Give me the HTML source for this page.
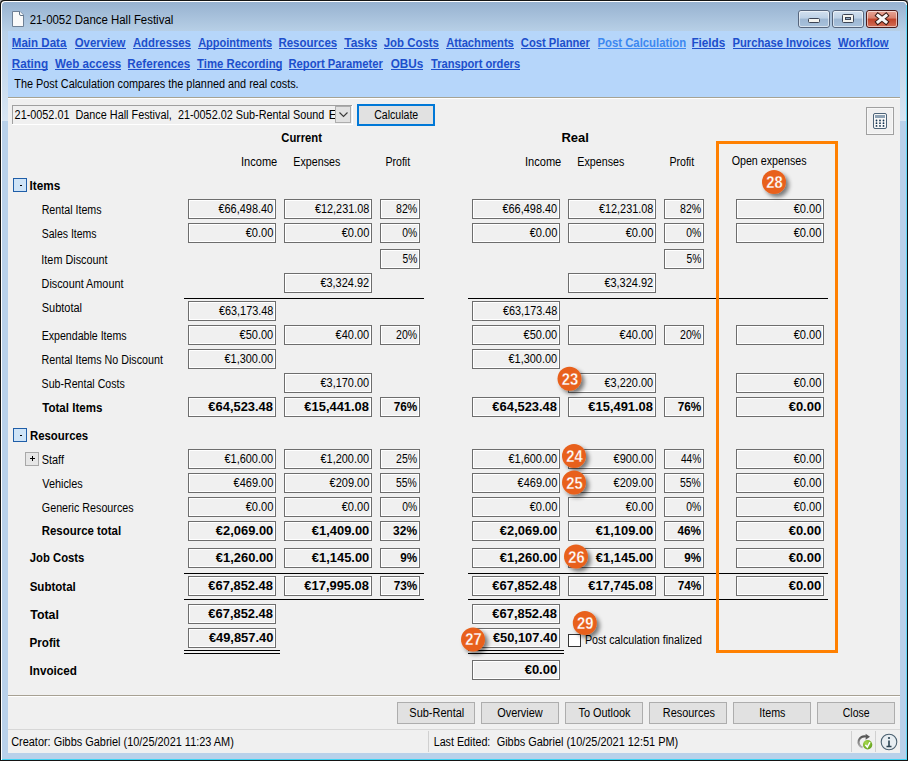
<!DOCTYPE html>
<html><head><meta charset="utf-8"><style>
html,body{margin:0;padding:0;width:908px;height:761px;overflow:hidden;background:#f0f0f0}
svg{display:block}
text{font-family:"Liberation Sans", sans-serif}
</style></head><body>
<svg width="908" height="761" viewBox="0 0 908 761" font-family='"Liberation Sans", sans-serif'>
<defs><linearGradient id="tb" x1="0" y1="0" x2="0" y2="1"><stop offset="0" stop-color="#97b2d0"/><stop offset="1" stop-color="#b7cfe6"/></linearGradient><linearGradient id="lf" x1="0" y1="0" x2="0" y2="1"><stop offset="0" stop-color="#b9d0e8"/><stop offset="1" stop-color="#bcd3ea"/></linearGradient><linearGradient id="btn" x1="0" y1="0" x2="0" y2="1"><stop offset="0" stop-color="#d3e1f0"/><stop offset="0.45" stop-color="#bdd1e6"/><stop offset="0.5" stop-color="#9db7d3"/><stop offset="1" stop-color="#a9c2dc"/></linearGradient><linearGradient id="cls" x1="0" y1="0" x2="0" y2="1"><stop offset="0" stop-color="#e8a89a"/><stop offset="0.45" stop-color="#d8806c"/><stop offset="0.5" stop-color="#c0432a"/><stop offset="1" stop-color="#d4715a"/></linearGradient><filter id="sh" x="-50%" y="-50%" width="200%" height="200%"><feGaussianBlur in="SourceAlpha" stdDeviation="2"/><feOffset dx="3" dy="3" result="o"/><feComponentTransfer><feFuncA type="linear" slope="0.5"/></feComponentTransfer><feMerge><feMergeNode/><feMergeNode in="SourceGraphic"/></feMerge></filter></defs><rect x="0" y="0" width="908" height="761" fill="#b4b4b4"/><path d="M0 761 V4 Q0 0 4 0 H904 Q908 0 908 4 V761 Z" fill="#141414"/><path d="M1 760 V5 Q1 1 5 1 H903 Q907 1 907 5 V760 Z" fill="#fff"/><path d="M2 759 V6 Q2 2 6 2 H902 Q906 2 906 6 V759 Z" fill="#b9d1ea"/><rect x="906" y="5" width="1" height="755" fill="#62d9f7"/><rect x="907" y="4" width="1" height="757" fill="#141414"/><rect x="2" y="759" width="905" height="1" fill="#3fd3f3"/><linearGradient id="sg" x1="0" y1="0" x2="0" y2="1"><stop offset="0" stop-color="#b8d0e8"/><stop offset="1" stop-color="#d9e6f3"/></linearGradient><rect x="2" y="31" width="6" height="90" fill="url(#sg)"/><rect x="900" y="31" width="6" height="90" fill="url(#sg)"/><path d="M2 31 V6 Q2 2 6 2 H902 Q906 2 906 6 V31 Z" fill="url(#tb)"/><path d="M12.5 11.5 H20 L23.5 15 V26.5 H12.5 Z" fill="#fafafa" stroke="#6f8196" stroke-width="1"/><path d="M19.5 11.5 V14 Q19.5 15.5 21 15.5 H23.5" fill="#ffffff" stroke="#5f7388" stroke-width="1"/><text x="29.64" y="24" font-size="12" textLength="143.66" lengthAdjust="spacingAndGlyphs">21-0052 Dance Hall Festival</text><rect x="798.5" y="10.5" width="31" height="17" fill="url(#btn)" stroke="#56657c" stroke-width="1" rx="2.5"/><rect x="799.5" y="11.5" width="29" height="15" fill="none" stroke="rgba(255,255,255,0.55)" stroke-width="1" rx="1.5"/><rect x="832.5" y="10.5" width="31" height="17" fill="url(#btn)" stroke="#56657c" stroke-width="1" rx="2.5"/><rect x="833.5" y="11.5" width="29" height="15" fill="none" stroke="rgba(255,255,255,0.55)" stroke-width="1" rx="1.5"/><rect x="866.5" y="10.5" width="31" height="17" fill="url(#cls)" stroke="#4a1a1a" stroke-width="1" rx="2.5"/><rect x="867.5" y="11.5" width="29" height="15" fill="none" stroke="rgba(255,255,255,0.55)" stroke-width="1" rx="1.5"/><rect x="808.5" y="18.5" width="11" height="4" fill="#f4f4f0" stroke="#3c4454" stroke-width="1" rx="1"/><rect x="842.5" y="14.5" width="11" height="8" fill="#f4f4f0" stroke="#3c4454" stroke-width="1" rx="1"/><rect x="845.5" y="17.5" width="5" height="2" fill="#8fa8c4" stroke="#3c4454" stroke-width="1"/><path d="M878 15.5 L886 22 M886 15.5 L878 22" stroke="#3a1a14" stroke-width="5" stroke-linecap="square"/><path d="M878 15.5 L886 22 M886 15.5 L878 22" stroke="#f6f6f6" stroke-width="3" stroke-linecap="square"/><rect x="8" y="31" width="892" height="66" fill="#b6d6fa"/><rect x="8" y="97" width="892" height="1" fill="#a6a393"/><rect x="8" y="98" width="892" height="1" fill="#ffffff"/><text x="11.75" y="47" font-size="12" font-weight="bold" fill="#1d4fcc" textLength="54.61" lengthAdjust="spacingAndGlyphs">Main Data</text><rect x="12" y="48" width="55" height="1" fill="#1d4fcc"/><text x="74.71" y="47" font-size="12" font-weight="bold" fill="#1d4fcc" textLength="50.72" lengthAdjust="spacingAndGlyphs">Overview</text><rect x="75" y="48" width="51" height="1" fill="#1d4fcc"/><text x="132.93" y="47" font-size="12" font-weight="bold" fill="#1d4fcc" textLength="57.9" lengthAdjust="spacingAndGlyphs">Addresses</text><rect x="133" y="48" width="58" height="1" fill="#1d4fcc"/><text x="198.14" y="47" font-size="12" font-weight="bold" fill="#1d4fcc" textLength="74.13" lengthAdjust="spacingAndGlyphs">Appointments</text><rect x="198" y="48" width="74" height="1" fill="#1d4fcc"/><text x="278.38" y="47" font-size="12" font-weight="bold" fill="#1d4fcc" textLength="58.83" lengthAdjust="spacingAndGlyphs">Resources</text><rect x="279" y="48" width="58" height="1" fill="#1d4fcc"/><text x="344.22" y="47" font-size="12" font-weight="bold" fill="#1d4fcc" textLength="33.08" lengthAdjust="spacingAndGlyphs">Tasks</text><rect x="344" y="48" width="33" height="1" fill="#1d4fcc"/><text x="383.76" y="47" font-size="12" font-weight="bold" fill="#1d4fcc" textLength="55.11" lengthAdjust="spacingAndGlyphs">Job Costs</text><rect x="384" y="48" width="55" height="1" fill="#1d4fcc"/><text x="446.14" y="47" font-size="12" font-weight="bold" fill="#1d4fcc" textLength="67.72" lengthAdjust="spacingAndGlyphs">Attachments</text><rect x="446" y="48" width="68" height="1" fill="#1d4fcc"/><text x="520.79" y="47" font-size="12" font-weight="bold" fill="#1d4fcc" textLength="69.15" lengthAdjust="spacingAndGlyphs">Cost Planner</text><rect x="521" y="48" width="69" height="1" fill="#1d4fcc"/><text x="597.47" y="47" font-size="12" font-weight="bold" fill="#3d88f0" textLength="88.74" lengthAdjust="spacingAndGlyphs">Post Calculation</text><rect x="598" y="48" width="88" height="1" fill="#3d88f0"/><text x="691.38" y="47" font-size="12" font-weight="bold" fill="#1d4fcc" textLength="33.94" lengthAdjust="spacingAndGlyphs">Fields</text><rect x="692" y="48" width="33" height="1" fill="#1d4fcc"/><text x="732.51" y="47" font-size="12" font-weight="bold" fill="#1d4fcc" textLength="98.36" lengthAdjust="spacingAndGlyphs">Purchase Invoices</text><rect x="733" y="48" width="98" height="1" fill="#1d4fcc"/><text x="838.1" y="47" font-size="12" font-weight="bold" fill="#1d4fcc" textLength="50.51" lengthAdjust="spacingAndGlyphs">Workflow</text><rect x="838" y="48" width="51" height="1" fill="#1d4fcc"/><text x="11.74" y="68" font-size="12" font-weight="bold" fill="#1d4fcc" textLength="36.36" lengthAdjust="spacingAndGlyphs">Rating</text><rect x="12" y="69" width="36" height="1" fill="#1d4fcc"/><text x="55.06" y="68" font-size="12" font-weight="bold" fill="#1d4fcc" textLength="66.26" lengthAdjust="spacingAndGlyphs">Web access</text><rect x="55" y="69" width="66" height="1" fill="#1d4fcc"/><text x="127.36" y="68" font-size="12" font-weight="bold" fill="#1d4fcc" textLength="62.89" lengthAdjust="spacingAndGlyphs">References</text><rect x="128" y="69" width="62" height="1" fill="#1d4fcc"/><text x="197.06" y="68" font-size="12" font-weight="bold" fill="#1d4fcc" textLength="85.48" lengthAdjust="spacingAndGlyphs">Time Recording</text><rect x="197" y="69" width="85" height="1" fill="#1d4fcc"/><text x="288.51" y="68" font-size="12" font-weight="bold" fill="#1d4fcc" textLength="94.26" lengthAdjust="spacingAndGlyphs">Report Parameter</text><rect x="289" y="69" width="94" height="1" fill="#1d4fcc"/><text x="390.71" y="68" font-size="12" font-weight="bold" fill="#1d4fcc" textLength="32.59" lengthAdjust="spacingAndGlyphs">OBUs</text><rect x="391" y="69" width="32" height="1" fill="#1d4fcc"/><text x="431.06" y="68" font-size="12" font-weight="bold" fill="#1d4fcc" textLength="89.07" lengthAdjust="spacingAndGlyphs">Transport orders</text><rect x="431" y="69" width="89" height="1" fill="#1d4fcc"/><text x="14.33" y="88" font-size="12" textLength="284.32" lengthAdjust="spacingAndGlyphs">The Post Calculation compares the planned and real costs.</text><rect x="8" y="99" width="892" height="654" fill="#f0f0f0"/><rect x="12" y="105" width="340" height="19" fill="#f0f0f0"/><rect x="12" y="105" width="340" height="1" fill="#a0a0a0"/><rect x="12" y="105" width="1" height="19" fill="#a0a0a0"/><rect x="12" y="124" width="341" height="1" fill="#ffffff"/><rect x="352" y="105" width="1" height="20" fill="#ffffff"/><text x="14.61" y="119" font-size="12" textLength="309.72" lengthAdjust="spacingAndGlyphs">21-0052.01  Dance Hall Festival,  21-0052.02 Sub-Rental Sound</text><text x="328.4" y="119" font-size="12" textLength="9.23" lengthAdjust="spacingAndGlyphs">E</text><rect x="335.5" y="106.5" width="15" height="16" fill="#e1e1e1" stroke="#adadad" stroke-width="1"/><path d="M339.5 112.5 L343.5 116.5 L347.5 112.5" fill="none" stroke="#3a3a3a" stroke-width="1.1"/><rect x="358" y="105" width="76" height="20" fill="#e1e1e1" stroke="#0078d7" stroke-width="2"/><text x="396.23" y="119" font-size="12" text-anchor="middle" textLength="43.92" lengthAdjust="spacingAndGlyphs">Calculate</text><rect x="866.5" y="107.5" width="27" height="27" fill="#f0f0f0" stroke="#a0a0a0" stroke-width="1"/><rect x="867.5" y="108.5" width="25" height="25" fill="none" stroke="#f7f7f7" stroke-width="1"/><rect x="873.5" y="113.5" width="13" height="15" fill="#f8f8f8" stroke="#4d6378" stroke-width="1" rx="1.5"/><rect x="875" y="115" width="10" height="3" fill="#8ea2b4"/><circle cx="876.5" cy="120.5" r="0.9" fill="#12324f"/><circle cx="876.5" cy="123.2" r="0.9" fill="#12324f"/><circle cx="876.5" cy="125.9" r="0.9" fill="#12324f"/><circle cx="880.0" cy="120.5" r="0.9" fill="#12324f"/><circle cx="880.0" cy="123.2" r="0.9" fill="#12324f"/><circle cx="880.0" cy="125.9" r="0.9" fill="#12324f"/><circle cx="883.5" cy="120.5" r="0.9" fill="#12324f"/><circle cx="883.5" cy="123.2" r="0.9" fill="#12324f"/><circle cx="883.5" cy="125.9" r="0.9" fill="#12324f"/><text x="281.37" y="142" font-size="12" font-weight="bold" textLength="40.58" lengthAdjust="spacingAndGlyphs">Current</text><text x="561.43" y="142" font-size="12" font-weight="bold" textLength="27.52" lengthAdjust="spacingAndGlyphs">Real</text><text x="240.98" y="166" font-size="12" textLength="36.3" lengthAdjust="spacingAndGlyphs">Income</text><text x="293.33" y="166" font-size="12" textLength="46.93" lengthAdjust="spacingAndGlyphs">Expenses</text><text x="385.38" y="166" font-size="12" textLength="24.81" lengthAdjust="spacingAndGlyphs">Profit</text><text x="524.98" y="166" font-size="12" textLength="36.3" lengthAdjust="spacingAndGlyphs">Income</text><text x="577.33" y="166" font-size="12" textLength="46.93" lengthAdjust="spacingAndGlyphs">Expenses</text><text x="669.38" y="166" font-size="12" textLength="24.81" lengthAdjust="spacingAndGlyphs">Profit</text><text x="731.63" y="165" font-size="12" textLength="74.92" lengthAdjust="spacingAndGlyphs">Open expenses</text><rect x="13.5" y="178.5" width="13" height="13" fill="#cfe4f7" stroke="#1f5ea8" stroke-width="1"/><rect x="20" y="185" width="2" height="1" fill="#000"/><text x="29.47" y="190" font-size="12" font-weight="bold" textLength="30.74" lengthAdjust="spacingAndGlyphs">Items</text><rect x="13.5" y="428.5" width="13" height="13" fill="#cfe4f7" stroke="#1f5ea8" stroke-width="1"/><rect x="20" y="435" width="2" height="1" fill="#000"/><text x="29.96" y="440" font-size="12" font-weight="bold" textLength="58.25" lengthAdjust="spacingAndGlyphs">Resources</text><rect x="25.5" y="452.5" width="13" height="13" fill="#e6e6e6" stroke="#a8a8a8" stroke-width="1"/><rect x="30" y="458" width="5" height="1" fill="#000"/><rect x="32" y="456" width="1" height="5" fill="#000"/><text x="41.65" y="214" font-size="12" textLength="59.93" lengthAdjust="spacingAndGlyphs">Rental Items</text><rect x="188" y="199" width="88" height="20" fill="#6d6d6d"/><rect x="189" y="200" width="86" height="18" fill="#ffffff"/><rect x="190" y="201" width="84" height="16" fill="#f0f0f0"/><text x="273.15" y="213" font-size="12" text-anchor="end" textLength="54.68" lengthAdjust="spacingAndGlyphs">€66,498.40</text><rect x="284" y="199" width="88" height="20" fill="#6d6d6d"/><rect x="285" y="200" width="86" height="18" fill="#ffffff"/><rect x="286" y="201" width="84" height="16" fill="#f0f0f0"/><text x="369.33" y="213" font-size="12" text-anchor="end" textLength="54.36" lengthAdjust="spacingAndGlyphs">€12,231.08</text><rect x="380" y="199" width="40" height="20" fill="#6d6d6d"/><rect x="381" y="200" width="38" height="18" fill="#ffffff"/><rect x="382" y="201" width="36" height="16" fill="#f0f0f0"/><text x="417.15" y="213" font-size="12" text-anchor="end" textLength="21.09" lengthAdjust="spacingAndGlyphs">82%</text><rect x="472" y="199" width="88" height="20" fill="#6d6d6d"/><rect x="473" y="200" width="86" height="18" fill="#ffffff"/><rect x="474" y="201" width="84" height="16" fill="#f0f0f0"/><text x="557.15" y="213" font-size="12" text-anchor="end" textLength="54.68" lengthAdjust="spacingAndGlyphs">€66,498.40</text><rect x="568" y="199" width="88" height="20" fill="#6d6d6d"/><rect x="569" y="200" width="86" height="18" fill="#ffffff"/><rect x="570" y="201" width="84" height="16" fill="#f0f0f0"/><text x="653.33" y="213" font-size="12" text-anchor="end" textLength="54.36" lengthAdjust="spacingAndGlyphs">€12,231.08</text><rect x="664" y="199" width="40" height="20" fill="#6d6d6d"/><rect x="665" y="200" width="38" height="18" fill="#ffffff"/><rect x="666" y="201" width="36" height="16" fill="#f0f0f0"/><text x="701.15" y="213" font-size="12" text-anchor="end" textLength="21.09" lengthAdjust="spacingAndGlyphs">82%</text><rect x="736" y="199" width="88" height="20" fill="#6d6d6d"/><rect x="737" y="200" width="86" height="18" fill="#ffffff"/><rect x="738" y="201" width="84" height="16" fill="#f0f0f0"/><text x="821.37" y="213" font-size="12" text-anchor="end" textLength="27.73" lengthAdjust="spacingAndGlyphs">€0.00</text><text x="41.75" y="238" font-size="12" textLength="54.87" lengthAdjust="spacingAndGlyphs">Sales Items</text><rect x="188" y="223" width="88" height="20" fill="#6d6d6d"/><rect x="189" y="224" width="86" height="18" fill="#ffffff"/><rect x="190" y="225" width="84" height="16" fill="#f0f0f0"/><text x="273.37" y="237" font-size="12" text-anchor="end" textLength="27.73" lengthAdjust="spacingAndGlyphs">€0.00</text><rect x="284" y="223" width="88" height="20" fill="#6d6d6d"/><rect x="285" y="224" width="86" height="18" fill="#ffffff"/><rect x="286" y="225" width="84" height="16" fill="#f0f0f0"/><text x="369.37" y="237" font-size="12" text-anchor="end" textLength="27.73" lengthAdjust="spacingAndGlyphs">€0.00</text><rect x="380" y="223" width="40" height="20" fill="#6d6d6d"/><rect x="381" y="224" width="38" height="18" fill="#ffffff"/><rect x="382" y="225" width="36" height="16" fill="#f0f0f0"/><text x="417.07" y="237" font-size="12" text-anchor="end" textLength="14.86" lengthAdjust="spacingAndGlyphs">0%</text><rect x="472" y="223" width="88" height="20" fill="#6d6d6d"/><rect x="473" y="224" width="86" height="18" fill="#ffffff"/><rect x="474" y="225" width="84" height="16" fill="#f0f0f0"/><text x="557.37" y="237" font-size="12" text-anchor="end" textLength="27.73" lengthAdjust="spacingAndGlyphs">€0.00</text><rect x="568" y="223" width="88" height="20" fill="#6d6d6d"/><rect x="569" y="224" width="86" height="18" fill="#ffffff"/><rect x="570" y="225" width="84" height="16" fill="#f0f0f0"/><text x="653.37" y="237" font-size="12" text-anchor="end" textLength="27.73" lengthAdjust="spacingAndGlyphs">€0.00</text><rect x="664" y="223" width="40" height="20" fill="#6d6d6d"/><rect x="665" y="224" width="38" height="18" fill="#ffffff"/><rect x="666" y="225" width="36" height="16" fill="#f0f0f0"/><text x="701.07" y="237" font-size="12" text-anchor="end" textLength="14.86" lengthAdjust="spacingAndGlyphs">0%</text><rect x="736" y="223" width="88" height="20" fill="#6d6d6d"/><rect x="737" y="224" width="86" height="18" fill="#ffffff"/><rect x="738" y="225" width="84" height="16" fill="#f0f0f0"/><text x="821.37" y="237" font-size="12" text-anchor="end" textLength="27.73" lengthAdjust="spacingAndGlyphs">€0.00</text><text x="41.37" y="264" font-size="12" textLength="66.16" lengthAdjust="spacingAndGlyphs">Item Discount</text><rect x="380" y="249" width="40" height="20" fill="#6d6d6d"/><rect x="381" y="250" width="38" height="18" fill="#ffffff"/><rect x="382" y="251" width="36" height="16" fill="#f0f0f0"/><text x="417.28" y="263" font-size="12" text-anchor="end" textLength="14.73" lengthAdjust="spacingAndGlyphs">5%</text><rect x="664" y="249" width="40" height="20" fill="#6d6d6d"/><rect x="665" y="250" width="38" height="18" fill="#ffffff"/><rect x="666" y="251" width="36" height="16" fill="#f0f0f0"/><text x="701.28" y="263" font-size="12" text-anchor="end" textLength="14.73" lengthAdjust="spacingAndGlyphs">5%</text><text x="41.57" y="288" font-size="12" textLength="81.89" lengthAdjust="spacingAndGlyphs">Discount Amount</text><rect x="284" y="273" width="88" height="20" fill="#6d6d6d"/><rect x="285" y="274" width="86" height="18" fill="#ffffff"/><rect x="286" y="275" width="84" height="16" fill="#f0f0f0"/><text x="369.15" y="287" font-size="12" text-anchor="end" textLength="48.75" lengthAdjust="spacingAndGlyphs">€3,324.92</text><rect x="568" y="273" width="88" height="20" fill="#6d6d6d"/><rect x="569" y="274" width="86" height="18" fill="#ffffff"/><rect x="570" y="275" width="84" height="16" fill="#f0f0f0"/><text x="653.15" y="287" font-size="12" text-anchor="end" textLength="48.75" lengthAdjust="spacingAndGlyphs">€3,324.92</text><text x="41.72" y="312" font-size="12" textLength="40.31" lengthAdjust="spacingAndGlyphs">Subtotal</text><rect x="188" y="301" width="88" height="20" fill="#6d6d6d"/><rect x="189" y="302" width="86" height="18" fill="#ffffff"/><rect x="190" y="303" width="84" height="16" fill="#f0f0f0"/><text x="273.33" y="315" font-size="12" text-anchor="end" textLength="54.36" lengthAdjust="spacingAndGlyphs">€63,173.48</text><rect x="472" y="301" width="88" height="20" fill="#6d6d6d"/><rect x="473" y="302" width="86" height="18" fill="#ffffff"/><rect x="474" y="303" width="84" height="16" fill="#f0f0f0"/><text x="557.33" y="315" font-size="12" text-anchor="end" textLength="54.36" lengthAdjust="spacingAndGlyphs">€63,173.48</text><text x="41.66" y="340" font-size="12" textLength="84.96" lengthAdjust="spacingAndGlyphs">Expendable Items</text><rect x="188" y="325" width="88" height="20" fill="#6d6d6d"/><rect x="189" y="326" width="86" height="18" fill="#ffffff"/><rect x="190" y="327" width="84" height="16" fill="#f0f0f0"/><text x="273.21" y="339" font-size="12" text-anchor="end" textLength="33.66" lengthAdjust="spacingAndGlyphs">€50.00</text><rect x="284" y="325" width="88" height="20" fill="#6d6d6d"/><rect x="285" y="326" width="86" height="18" fill="#ffffff"/><rect x="286" y="327" width="84" height="16" fill="#f0f0f0"/><text x="369.21" y="339" font-size="12" text-anchor="end" textLength="33.66" lengthAdjust="spacingAndGlyphs">€40.00</text><rect x="380" y="325" width="40" height="20" fill="#6d6d6d"/><rect x="381" y="326" width="38" height="18" fill="#ffffff"/><rect x="382" y="327" width="36" height="16" fill="#f0f0f0"/><text x="417.11" y="339" font-size="12" text-anchor="end" textLength="21.05" lengthAdjust="spacingAndGlyphs">20%</text><rect x="472" y="325" width="88" height="20" fill="#6d6d6d"/><rect x="473" y="326" width="86" height="18" fill="#ffffff"/><rect x="474" y="327" width="84" height="16" fill="#f0f0f0"/><text x="557.21" y="339" font-size="12" text-anchor="end" textLength="33.66" lengthAdjust="spacingAndGlyphs">€50.00</text><rect x="568" y="325" width="88" height="20" fill="#6d6d6d"/><rect x="569" y="326" width="86" height="18" fill="#ffffff"/><rect x="570" y="327" width="84" height="16" fill="#f0f0f0"/><text x="653.21" y="339" font-size="12" text-anchor="end" textLength="33.66" lengthAdjust="spacingAndGlyphs">€40.00</text><rect x="664" y="325" width="40" height="20" fill="#6d6d6d"/><rect x="665" y="326" width="38" height="18" fill="#ffffff"/><rect x="666" y="327" width="36" height="16" fill="#f0f0f0"/><text x="701.11" y="339" font-size="12" text-anchor="end" textLength="21.05" lengthAdjust="spacingAndGlyphs">20%</text><rect x="736" y="325" width="88" height="20" fill="#6d6d6d"/><rect x="737" y="326" width="86" height="18" fill="#ffffff"/><rect x="738" y="327" width="84" height="16" fill="#f0f0f0"/><text x="821.37" y="339" font-size="12" text-anchor="end" textLength="27.73" lengthAdjust="spacingAndGlyphs">€0.00</text><text x="41.52" y="364" font-size="12" textLength="121.4" lengthAdjust="spacingAndGlyphs">Rental Items No Discount</text><rect x="188" y="349" width="88" height="20" fill="#6d6d6d"/><rect x="189" y="350" width="86" height="18" fill="#ffffff"/><rect x="190" y="351" width="84" height="16" fill="#f0f0f0"/><text x="273.15" y="363" font-size="12" text-anchor="end" textLength="48.61" lengthAdjust="spacingAndGlyphs">€1,300.00</text><rect x="472" y="349" width="88" height="20" fill="#6d6d6d"/><rect x="473" y="350" width="86" height="18" fill="#ffffff"/><rect x="474" y="351" width="84" height="16" fill="#f0f0f0"/><text x="557.15" y="363" font-size="12" text-anchor="end" textLength="48.61" lengthAdjust="spacingAndGlyphs">€1,300.00</text><text x="41.6" y="388" font-size="12" textLength="83.23" lengthAdjust="spacingAndGlyphs">Sub-Rental Costs</text><rect x="284" y="373" width="88" height="20" fill="#6d6d6d"/><rect x="285" y="374" width="86" height="18" fill="#ffffff"/><rect x="286" y="375" width="84" height="16" fill="#f0f0f0"/><text x="369.15" y="387" font-size="12" text-anchor="end" textLength="48.61" lengthAdjust="spacingAndGlyphs">€3,170.00</text><rect x="568" y="373" width="88" height="20" fill="#6d6d6d"/><rect x="569" y="374" width="86" height="18" fill="#ffffff"/><rect x="570" y="375" width="84" height="16" fill="#f0f0f0"/><text x="653.15" y="387" font-size="12" text-anchor="end" textLength="48.61" lengthAdjust="spacingAndGlyphs">€3,220.00</text><rect x="736" y="373" width="88" height="20" fill="#6d6d6d"/><rect x="737" y="374" width="86" height="18" fill="#ffffff"/><rect x="738" y="375" width="84" height="16" fill="#f0f0f0"/><text x="821.37" y="387" font-size="12" text-anchor="end" textLength="27.73" lengthAdjust="spacingAndGlyphs">€0.00</text><text x="42.25" y="412" font-size="12" font-weight="bold" textLength="60.18" lengthAdjust="spacingAndGlyphs">Total Items</text><rect x="188" y="397" width="88" height="20" fill="#6d6d6d"/><rect x="189" y="398" width="86" height="18" fill="#ffffff"/><rect x="190" y="399" width="84" height="16" fill="#f0f0f0"/><text x="272.96" y="411" font-size="12" font-weight="bold" text-anchor="end" textLength="64.6" lengthAdjust="spacingAndGlyphs">€64,523.48</text><rect x="284" y="397" width="88" height="20" fill="#6d6d6d"/><rect x="285" y="398" width="86" height="18" fill="#ffffff"/><rect x="286" y="399" width="84" height="16" fill="#f0f0f0"/><text x="368.96" y="411" font-size="12" font-weight="bold" text-anchor="end" textLength="64.6" lengthAdjust="spacingAndGlyphs">€15,441.08</text><rect x="380" y="397" width="40" height="20" fill="#6d6d6d"/><rect x="381" y="398" width="38" height="18" fill="#ffffff"/><rect x="382" y="399" width="36" height="16" fill="#f0f0f0"/><text x="417.14" y="411" font-size="12" font-weight="bold" text-anchor="end" textLength="23.48" lengthAdjust="spacingAndGlyphs">76%</text><rect x="472" y="397" width="88" height="20" fill="#6d6d6d"/><rect x="473" y="398" width="86" height="18" fill="#ffffff"/><rect x="474" y="399" width="84" height="16" fill="#f0f0f0"/><text x="556.96" y="411" font-size="12" font-weight="bold" text-anchor="end" textLength="64.6" lengthAdjust="spacingAndGlyphs">€64,523.48</text><rect x="568" y="397" width="88" height="20" fill="#6d6d6d"/><rect x="569" y="398" width="86" height="18" fill="#ffffff"/><rect x="570" y="399" width="84" height="16" fill="#f0f0f0"/><text x="652.96" y="411" font-size="12" font-weight="bold" text-anchor="end" textLength="64.6" lengthAdjust="spacingAndGlyphs">€15,491.08</text><rect x="664" y="397" width="40" height="20" fill="#6d6d6d"/><rect x="665" y="398" width="38" height="18" fill="#ffffff"/><rect x="666" y="399" width="36" height="16" fill="#f0f0f0"/><text x="701.14" y="411" font-size="12" font-weight="bold" text-anchor="end" textLength="23.48" lengthAdjust="spacingAndGlyphs">76%</text><rect x="736" y="397" width="88" height="20" fill="#6d6d6d"/><rect x="737" y="398" width="86" height="18" fill="#ffffff"/><rect x="738" y="399" width="84" height="16" fill="#f0f0f0"/><text x="821.22" y="411" font-size="12" font-weight="bold" text-anchor="end" textLength="32.57" lengthAdjust="spacingAndGlyphs">€0.00</text><text x="41.71" y="464" font-size="12" textLength="22.26" lengthAdjust="spacingAndGlyphs">Staff</text><rect x="188" y="449" width="88" height="20" fill="#6d6d6d"/><rect x="189" y="450" width="86" height="18" fill="#ffffff"/><rect x="190" y="451" width="84" height="16" fill="#f0f0f0"/><text x="273.15" y="463" font-size="12" text-anchor="end" textLength="48.61" lengthAdjust="spacingAndGlyphs">€1,600.00</text><rect x="284" y="449" width="88" height="20" fill="#6d6d6d"/><rect x="285" y="450" width="86" height="18" fill="#ffffff"/><rect x="286" y="451" width="84" height="16" fill="#f0f0f0"/><text x="369.15" y="463" font-size="12" text-anchor="end" textLength="48.61" lengthAdjust="spacingAndGlyphs">€1,200.00</text><rect x="380" y="449" width="40" height="20" fill="#6d6d6d"/><rect x="381" y="450" width="38" height="18" fill="#ffffff"/><rect x="382" y="451" width="36" height="16" fill="#f0f0f0"/><text x="417.11" y="463" font-size="12" text-anchor="end" textLength="21.05" lengthAdjust="spacingAndGlyphs">25%</text><rect x="472" y="449" width="88" height="20" fill="#6d6d6d"/><rect x="473" y="450" width="86" height="18" fill="#ffffff"/><rect x="474" y="451" width="84" height="16" fill="#f0f0f0"/><text x="557.15" y="463" font-size="12" text-anchor="end" textLength="48.61" lengthAdjust="spacingAndGlyphs">€1,600.00</text><rect x="568" y="449" width="88" height="20" fill="#6d6d6d"/><rect x="569" y="450" width="86" height="18" fill="#ffffff"/><rect x="570" y="451" width="84" height="16" fill="#f0f0f0"/><text x="653.33" y="463" font-size="12" text-anchor="end" textLength="39.81" lengthAdjust="spacingAndGlyphs">€900.00</text><rect x="664" y="449" width="40" height="20" fill="#6d6d6d"/><rect x="665" y="450" width="38" height="18" fill="#ffffff"/><rect x="666" y="451" width="36" height="16" fill="#f0f0f0"/><text x="701.2" y="463" font-size="12" text-anchor="end" textLength="20.3" lengthAdjust="spacingAndGlyphs">44%</text><rect x="736" y="449" width="88" height="20" fill="#6d6d6d"/><rect x="737" y="450" width="86" height="18" fill="#ffffff"/><rect x="738" y="451" width="84" height="16" fill="#f0f0f0"/><text x="821.37" y="463" font-size="12" text-anchor="end" textLength="27.73" lengthAdjust="spacingAndGlyphs">€0.00</text><text x="42.22" y="488" font-size="12" textLength="40.53" lengthAdjust="spacingAndGlyphs">Vehicles</text><rect x="188" y="473" width="88" height="20" fill="#6d6d6d"/><rect x="189" y="474" width="86" height="18" fill="#ffffff"/><rect x="190" y="475" width="84" height="16" fill="#f0f0f0"/><text x="273.33" y="487" font-size="12" text-anchor="end" textLength="39.81" lengthAdjust="spacingAndGlyphs">€469.00</text><rect x="284" y="473" width="88" height="20" fill="#6d6d6d"/><rect x="285" y="474" width="86" height="18" fill="#ffffff"/><rect x="286" y="475" width="84" height="16" fill="#f0f0f0"/><text x="369.33" y="487" font-size="12" text-anchor="end" textLength="39.81" lengthAdjust="spacingAndGlyphs">€209.00</text><rect x="380" y="473" width="40" height="20" fill="#6d6d6d"/><rect x="381" y="474" width="38" height="18" fill="#ffffff"/><rect x="382" y="475" width="36" height="16" fill="#f0f0f0"/><text x="416.86" y="487" font-size="12" text-anchor="end" textLength="20.79" lengthAdjust="spacingAndGlyphs">55%</text><rect x="472" y="473" width="88" height="20" fill="#6d6d6d"/><rect x="473" y="474" width="86" height="18" fill="#ffffff"/><rect x="474" y="475" width="84" height="16" fill="#f0f0f0"/><text x="557.33" y="487" font-size="12" text-anchor="end" textLength="39.81" lengthAdjust="spacingAndGlyphs">€469.00</text><rect x="568" y="473" width="88" height="20" fill="#6d6d6d"/><rect x="569" y="474" width="86" height="18" fill="#ffffff"/><rect x="570" y="475" width="84" height="16" fill="#f0f0f0"/><text x="653.33" y="487" font-size="12" text-anchor="end" textLength="39.81" lengthAdjust="spacingAndGlyphs">€209.00</text><rect x="664" y="473" width="40" height="20" fill="#6d6d6d"/><rect x="665" y="474" width="38" height="18" fill="#ffffff"/><rect x="666" y="475" width="36" height="16" fill="#f0f0f0"/><text x="700.86" y="487" font-size="12" text-anchor="end" textLength="20.79" lengthAdjust="spacingAndGlyphs">55%</text><rect x="736" y="473" width="88" height="20" fill="#6d6d6d"/><rect x="737" y="474" width="86" height="18" fill="#ffffff"/><rect x="738" y="475" width="84" height="16" fill="#f0f0f0"/><text x="821.37" y="487" font-size="12" text-anchor="end" textLength="27.73" lengthAdjust="spacingAndGlyphs">€0.00</text><text x="41.85" y="512" font-size="12" textLength="91.72" lengthAdjust="spacingAndGlyphs">Generic Resources</text><rect x="188" y="497" width="88" height="20" fill="#6d6d6d"/><rect x="189" y="498" width="86" height="18" fill="#ffffff"/><rect x="190" y="499" width="84" height="16" fill="#f0f0f0"/><text x="273.37" y="511" font-size="12" text-anchor="end" textLength="27.73" lengthAdjust="spacingAndGlyphs">€0.00</text><rect x="284" y="497" width="88" height="20" fill="#6d6d6d"/><rect x="285" y="498" width="86" height="18" fill="#ffffff"/><rect x="286" y="499" width="84" height="16" fill="#f0f0f0"/><text x="369.37" y="511" font-size="12" text-anchor="end" textLength="27.73" lengthAdjust="spacingAndGlyphs">€0.00</text><rect x="380" y="497" width="40" height="20" fill="#6d6d6d"/><rect x="381" y="498" width="38" height="18" fill="#ffffff"/><rect x="382" y="499" width="36" height="16" fill="#f0f0f0"/><text x="417.07" y="511" font-size="12" text-anchor="end" textLength="14.86" lengthAdjust="spacingAndGlyphs">0%</text><rect x="472" y="497" width="88" height="20" fill="#6d6d6d"/><rect x="473" y="498" width="86" height="18" fill="#ffffff"/><rect x="474" y="499" width="84" height="16" fill="#f0f0f0"/><text x="557.37" y="511" font-size="12" text-anchor="end" textLength="27.73" lengthAdjust="spacingAndGlyphs">€0.00</text><rect x="568" y="497" width="88" height="20" fill="#6d6d6d"/><rect x="569" y="498" width="86" height="18" fill="#ffffff"/><rect x="570" y="499" width="84" height="16" fill="#f0f0f0"/><text x="653.37" y="511" font-size="12" text-anchor="end" textLength="27.73" lengthAdjust="spacingAndGlyphs">€0.00</text><rect x="664" y="497" width="40" height="20" fill="#6d6d6d"/><rect x="665" y="498" width="38" height="18" fill="#ffffff"/><rect x="666" y="499" width="36" height="16" fill="#f0f0f0"/><text x="701.07" y="511" font-size="12" text-anchor="end" textLength="14.86" lengthAdjust="spacingAndGlyphs">0%</text><rect x="736" y="497" width="88" height="20" fill="#6d6d6d"/><rect x="737" y="498" width="86" height="18" fill="#ffffff"/><rect x="738" y="499" width="84" height="16" fill="#f0f0f0"/><text x="821.37" y="511" font-size="12" text-anchor="end" textLength="27.73" lengthAdjust="spacingAndGlyphs">€0.00</text><text x="41.76" y="535" font-size="12" font-weight="bold" textLength="79.39" lengthAdjust="spacingAndGlyphs">Resource total</text><rect x="188" y="521" width="88" height="20" fill="#6d6d6d"/><rect x="189" y="522" width="86" height="18" fill="#ffffff"/><rect x="190" y="523" width="84" height="16" fill="#f0f0f0"/><text x="273.31" y="535" font-size="12" font-weight="bold" text-anchor="end" textLength="57.42" lengthAdjust="spacingAndGlyphs">€2,069.00</text><rect x="284" y="521" width="88" height="20" fill="#6d6d6d"/><rect x="285" y="522" width="86" height="18" fill="#ffffff"/><rect x="286" y="523" width="84" height="16" fill="#f0f0f0"/><text x="369.31" y="535" font-size="12" font-weight="bold" text-anchor="end" textLength="57.42" lengthAdjust="spacingAndGlyphs">€1,409.00</text><rect x="380" y="521" width="40" height="20" fill="#6d6d6d"/><rect x="381" y="522" width="38" height="18" fill="#ffffff"/><rect x="382" y="523" width="36" height="16" fill="#f0f0f0"/><text x="417.04" y="535" font-size="12" font-weight="bold" text-anchor="end" textLength="23.95" lengthAdjust="spacingAndGlyphs">32%</text><rect x="472" y="521" width="88" height="20" fill="#6d6d6d"/><rect x="473" y="522" width="86" height="18" fill="#ffffff"/><rect x="474" y="523" width="84" height="16" fill="#f0f0f0"/><text x="557.31" y="535" font-size="12" font-weight="bold" text-anchor="end" textLength="57.42" lengthAdjust="spacingAndGlyphs">€2,069.00</text><rect x="568" y="521" width="88" height="20" fill="#6d6d6d"/><rect x="569" y="522" width="86" height="18" fill="#ffffff"/><rect x="570" y="523" width="84" height="16" fill="#f0f0f0"/><text x="653.31" y="535" font-size="12" font-weight="bold" text-anchor="end" textLength="57.42" lengthAdjust="spacingAndGlyphs">€1,109.00</text><rect x="664" y="521" width="40" height="20" fill="#6d6d6d"/><rect x="665" y="522" width="38" height="18" fill="#ffffff"/><rect x="666" y="523" width="36" height="16" fill="#f0f0f0"/><text x="701.05" y="535" font-size="12" font-weight="bold" text-anchor="end" textLength="23.52" lengthAdjust="spacingAndGlyphs">46%</text><rect x="736" y="521" width="88" height="20" fill="#6d6d6d"/><rect x="737" y="522" width="86" height="18" fill="#ffffff"/><rect x="738" y="523" width="84" height="16" fill="#f0f0f0"/><text x="821.22" y="535" font-size="12" font-weight="bold" text-anchor="end" textLength="32.57" lengthAdjust="spacingAndGlyphs">€0.00</text><text x="29.85" y="562" font-size="12" font-weight="bold" textLength="54.55" lengthAdjust="spacingAndGlyphs">Job Costs</text><rect x="188" y="548" width="88" height="20" fill="#6d6d6d"/><rect x="189" y="549" width="86" height="18" fill="#ffffff"/><rect x="190" y="550" width="84" height="16" fill="#f0f0f0"/><text x="273.31" y="562" font-size="12" font-weight="bold" text-anchor="end" textLength="57.42" lengthAdjust="spacingAndGlyphs">€1,260.00</text><rect x="284" y="548" width="88" height="20" fill="#6d6d6d"/><rect x="285" y="549" width="86" height="18" fill="#ffffff"/><rect x="286" y="550" width="84" height="16" fill="#f0f0f0"/><text x="369.31" y="562" font-size="12" font-weight="bold" text-anchor="end" textLength="57.42" lengthAdjust="spacingAndGlyphs">€1,145.00</text><rect x="380" y="548" width="40" height="20" fill="#6d6d6d"/><rect x="381" y="549" width="38" height="18" fill="#ffffff"/><rect x="382" y="550" width="36" height="16" fill="#f0f0f0"/><text x="417.02" y="562" font-size="12" font-weight="bold" text-anchor="end" textLength="16.83" lengthAdjust="spacingAndGlyphs">9%</text><rect x="472" y="548" width="88" height="20" fill="#6d6d6d"/><rect x="473" y="549" width="86" height="18" fill="#ffffff"/><rect x="474" y="550" width="84" height="16" fill="#f0f0f0"/><text x="557.31" y="562" font-size="12" font-weight="bold" text-anchor="end" textLength="57.42" lengthAdjust="spacingAndGlyphs">€1,260.00</text><rect x="568" y="548" width="88" height="20" fill="#6d6d6d"/><rect x="569" y="549" width="86" height="18" fill="#ffffff"/><rect x="570" y="550" width="84" height="16" fill="#f0f0f0"/><text x="653.31" y="562" font-size="12" font-weight="bold" text-anchor="end" textLength="57.42" lengthAdjust="spacingAndGlyphs">€1,145.00</text><rect x="664" y="548" width="40" height="20" fill="#6d6d6d"/><rect x="665" y="549" width="38" height="18" fill="#ffffff"/><rect x="666" y="550" width="36" height="16" fill="#f0f0f0"/><text x="701.02" y="562" font-size="12" font-weight="bold" text-anchor="end" textLength="16.83" lengthAdjust="spacingAndGlyphs">9%</text><rect x="736" y="548" width="88" height="20" fill="#6d6d6d"/><rect x="737" y="549" width="86" height="18" fill="#ffffff"/><rect x="738" y="550" width="84" height="16" fill="#f0f0f0"/><text x="821.22" y="562" font-size="12" font-weight="bold" text-anchor="end" textLength="32.57" lengthAdjust="spacingAndGlyphs">€0.00</text><text x="29.66" y="591" font-size="12" font-weight="bold" textLength="46.14" lengthAdjust="spacingAndGlyphs">Subtotal</text><rect x="188" y="576" width="88" height="20" fill="#6d6d6d"/><rect x="189" y="577" width="86" height="18" fill="#ffffff"/><rect x="190" y="578" width="84" height="16" fill="#f0f0f0"/><text x="272.96" y="590" font-size="12" font-weight="bold" text-anchor="end" textLength="64.6" lengthAdjust="spacingAndGlyphs">€67,852.48</text><rect x="284" y="576" width="88" height="20" fill="#6d6d6d"/><rect x="285" y="577" width="86" height="18" fill="#ffffff"/><rect x="286" y="578" width="84" height="16" fill="#f0f0f0"/><text x="368.96" y="590" font-size="12" font-weight="bold" text-anchor="end" textLength="64.6" lengthAdjust="spacingAndGlyphs">€17,995.08</text><rect x="380" y="576" width="40" height="20" fill="#6d6d6d"/><rect x="381" y="577" width="38" height="18" fill="#ffffff"/><rect x="382" y="578" width="36" height="16" fill="#f0f0f0"/><text x="417.14" y="590" font-size="12" font-weight="bold" text-anchor="end" textLength="23.48" lengthAdjust="spacingAndGlyphs">73%</text><rect x="472" y="576" width="88" height="20" fill="#6d6d6d"/><rect x="473" y="577" width="86" height="18" fill="#ffffff"/><rect x="474" y="578" width="84" height="16" fill="#f0f0f0"/><text x="556.96" y="590" font-size="12" font-weight="bold" text-anchor="end" textLength="64.6" lengthAdjust="spacingAndGlyphs">€67,852.48</text><rect x="568" y="576" width="88" height="20" fill="#6d6d6d"/><rect x="569" y="577" width="86" height="18" fill="#ffffff"/><rect x="570" y="578" width="84" height="16" fill="#f0f0f0"/><text x="652.96" y="590" font-size="12" font-weight="bold" text-anchor="end" textLength="64.6" lengthAdjust="spacingAndGlyphs">€17,745.08</text><rect x="664" y="576" width="40" height="20" fill="#6d6d6d"/><rect x="665" y="577" width="38" height="18" fill="#ffffff"/><rect x="666" y="578" width="36" height="16" fill="#f0f0f0"/><text x="701.14" y="590" font-size="12" font-weight="bold" text-anchor="end" textLength="23.48" lengthAdjust="spacingAndGlyphs">74%</text><rect x="736" y="576" width="88" height="20" fill="#6d6d6d"/><rect x="737" y="577" width="86" height="18" fill="#ffffff"/><rect x="738" y="578" width="84" height="16" fill="#f0f0f0"/><text x="821.22" y="590" font-size="12" font-weight="bold" text-anchor="end" textLength="32.57" lengthAdjust="spacingAndGlyphs">€0.00</text><text x="30.25" y="619" font-size="12" font-weight="bold" textLength="28.64" lengthAdjust="spacingAndGlyphs">Total</text><rect x="188" y="604" width="88" height="20" fill="#6d6d6d"/><rect x="189" y="605" width="86" height="18" fill="#ffffff"/><rect x="190" y="606" width="84" height="16" fill="#f0f0f0"/><text x="272.96" y="618" font-size="12" font-weight="bold" text-anchor="end" textLength="64.6" lengthAdjust="spacingAndGlyphs">€67,852.48</text><rect x="472" y="604" width="88" height="20" fill="#6d6d6d"/><rect x="473" y="605" width="86" height="18" fill="#ffffff"/><rect x="474" y="606" width="84" height="16" fill="#f0f0f0"/><text x="556.96" y="618" font-size="12" font-weight="bold" text-anchor="end" textLength="64.6" lengthAdjust="spacingAndGlyphs">€67,852.48</text><text x="29.58" y="647" font-size="12" font-weight="bold" textLength="30.4" lengthAdjust="spacingAndGlyphs">Profit</text><rect x="188" y="628" width="88" height="20" fill="#6d6d6d"/><rect x="189" y="629" width="86" height="18" fill="#ffffff"/><rect x="190" y="630" width="84" height="16" fill="#f0f0f0"/><text x="273.31" y="642" font-size="12" font-weight="bold" text-anchor="end" textLength="64.4" lengthAdjust="spacingAndGlyphs">€49,857.40</text><rect x="472" y="628" width="88" height="20" fill="#6d6d6d"/><rect x="473" y="629" width="86" height="18" fill="#ffffff"/><rect x="474" y="630" width="84" height="16" fill="#f0f0f0"/><text x="557.31" y="642" font-size="12" font-weight="bold" text-anchor="end" textLength="64.4" lengthAdjust="spacingAndGlyphs">€50,107.40</text><text x="29.58" y="675" font-size="12" font-weight="bold" textLength="47.4" lengthAdjust="spacingAndGlyphs">Invoiced</text><rect x="472" y="660" width="88" height="20" fill="#6d6d6d"/><rect x="473" y="661" width="86" height="18" fill="#ffffff"/><rect x="474" y="662" width="84" height="16" fill="#f0f0f0"/><text x="557.22" y="674" font-size="12" font-weight="bold" text-anchor="end" textLength="32.57" lengthAdjust="spacingAndGlyphs">€0.00</text><rect x="184" y="298" width="240" height="1" fill="#000"/><rect x="468" y="298" width="360" height="1" fill="#000"/><rect x="184" y="573" width="240" height="1" fill="#000"/><rect x="468" y="573" width="360" height="1" fill="#000"/><rect x="184" y="599" width="240" height="1" fill="#000"/><rect x="468" y="599" width="360" height="1" fill="#000"/><rect x="184" y="650" width="96" height="1" fill="#000"/><rect x="468" y="650" width="96" height="1" fill="#000"/><rect x="184" y="653" width="96" height="1" fill="#000"/><rect x="468" y="653" width="96" height="1" fill="#000"/><rect x="568.5" y="634.5" width="12" height="12" fill="#ffffff" stroke="#333333" stroke-width="1"/><text x="584.88" y="644" font-size="12" textLength="117.15" lengthAdjust="spacingAndGlyphs">Post calculation finalized</text><rect x="717.5" y="142.5" width="119" height="509" fill="none" stroke="#ff8000" stroke-width="3"/><g filter="url(#sh)"><circle cx="569.5" cy="378.7" r="12" fill="#e8611b"/></g><text x="569.9" y="384.7" font-size="16.3" font-weight="bold" fill="#ffffff" text-anchor="middle" textLength="16.4" lengthAdjust="spacingAndGlyphs" stroke="#e8611b" stroke-width="0.3">23</text><g filter="url(#sh)"><circle cx="574" cy="456" r="12" fill="#e8611b"/></g><text x="574.4" y="462" font-size="16.3" font-weight="bold" fill="#ffffff" text-anchor="middle" textLength="16.4" lengthAdjust="spacingAndGlyphs" stroke="#e8611b" stroke-width="0.3">24</text><g filter="url(#sh)"><circle cx="574" cy="482.5" r="12" fill="#e8611b"/></g><text x="574.4" y="488.5" font-size="16.3" font-weight="bold" fill="#ffffff" text-anchor="middle" textLength="16.4" lengthAdjust="spacingAndGlyphs" stroke="#e8611b" stroke-width="0.3">25</text><g filter="url(#sh)"><circle cx="576" cy="556.6" r="12" fill="#e8611b"/></g><text x="576.4" y="562.6" font-size="16.3" font-weight="bold" fill="#ffffff" text-anchor="middle" textLength="16.4" lengthAdjust="spacingAndGlyphs" stroke="#e8611b" stroke-width="0.3">26</text><g filter="url(#sh)"><circle cx="473" cy="639.4" r="12" fill="#e8611b"/></g><text x="473.4" y="645.4" font-size="16.3" font-weight="bold" fill="#ffffff" text-anchor="middle" textLength="16.4" lengthAdjust="spacingAndGlyphs" stroke="#e8611b" stroke-width="0.3">27</text><g filter="url(#sh)"><circle cx="774" cy="182" r="12" fill="#e8611b"/></g><text x="774.4" y="188" font-size="16.3" font-weight="bold" fill="#ffffff" text-anchor="middle" textLength="16.4" lengthAdjust="spacingAndGlyphs" stroke="#e8611b" stroke-width="0.3">28</text><g filter="url(#sh)"><circle cx="584.8" cy="623" r="12" fill="#e8611b"/></g><text x="585.1999999999999" y="629" font-size="16.3" font-weight="bold" fill="#ffffff" text-anchor="middle" textLength="16.4" lengthAdjust="spacingAndGlyphs" stroke="#e8611b" stroke-width="0.3">29</text><rect x="8" y="695" width="892" height="1" fill="#a7a193"/><rect x="8" y="696" width="892" height="1" fill="#ffffff"/><rect x="397.5" y="702.5" width="77" height="21" fill="#e1e1e1" stroke="#adadad" stroke-width="1"/><text x="436.8" y="717" font-size="12" text-anchor="middle" textLength="54.96" lengthAdjust="spacingAndGlyphs">Sub-Rental</text><rect x="481.5" y="702.5" width="77" height="21" fill="#e1e1e1" stroke="#adadad" stroke-width="1"/><text x="519.95" y="717" font-size="12" text-anchor="middle" textLength="45.53" lengthAdjust="spacingAndGlyphs">Overview</text><rect x="565.5" y="702.5" width="77" height="21" fill="#e1e1e1" stroke="#adadad" stroke-width="1"/><text x="604.54" y="717" font-size="12" text-anchor="middle" textLength="52.08" lengthAdjust="spacingAndGlyphs">To Outlook</text><rect x="649.5" y="702.5" width="77" height="21" fill="#e1e1e1" stroke="#adadad" stroke-width="1"/><text x="688.87" y="717" font-size="12" text-anchor="middle" textLength="52.09" lengthAdjust="spacingAndGlyphs">Resources</text><rect x="733.5" y="702.5" width="77" height="21" fill="#e1e1e1" stroke="#adadad" stroke-width="1"/><text x="772.33" y="717" font-size="12" text-anchor="middle" textLength="26.15" lengthAdjust="spacingAndGlyphs">Items</text><rect x="817.5" y="702.5" width="77" height="21" fill="#e1e1e1" stroke="#adadad" stroke-width="1"/><text x="856.13" y="717" font-size="12" text-anchor="middle" textLength="26.79" lengthAdjust="spacingAndGlyphs">Close</text><rect x="8" y="729" width="892" height="1" fill="#d7d7d7"/><text x="11.19" y="746" font-size="12" textLength="222.66" lengthAdjust="spacingAndGlyphs">Creator: Gibbs Gabriel (10/25/2021 11:23 AM)</text><rect x="428" y="731" width="1" height="21" fill="#d0d0d0"/><text x="433.67" y="746" font-size="12" textLength="56.7" lengthAdjust="spacingAndGlyphs">Last Edited:</text><text x="496.68" y="746" font-size="12" textLength="181.49" lengthAdjust="spacingAndGlyphs">Gibbs Gabriel (10/25/2021 12:51 PM)</text><rect x="851" y="731" width="1" height="21" fill="#d0d0d0"/><rect x="875" y="731" width="1" height="21" fill="#d0d0d0"/><linearGradient id="sy" x1="0" y1="0" x2="0" y2="1"><stop offset="0" stop-color="#555"/><stop offset="1" stop-color="#b8b8b8"/></linearGradient><path d="M862.6 747.6 A5.6 5.6 0 1 1 866 736.6" fill="none" stroke="url(#sy)" stroke-width="2.1"/><path d="M865.6 733.8 L870 736.8 L865.6 739.8 Z" fill="#5a5a5a"/><radialGradient id="gr" cx="0.35" cy="0.3" r="0.8"><stop offset="0" stop-color="#a6d84a"/><stop offset="1" stop-color="#5f9e1a"/></radialGradient><circle cx="867.6" cy="744.7" r="4.7" fill="url(#gr)"/><path d="M865.4 744.8 L867.3 747.2 L870 742.2" fill="none" stroke="#fff" stroke-width="1.5"/><circle cx="889" cy="742" r="7.8" fill="#e8eef2" stroke="#4a6070" stroke-width="1.1"/><circle cx="889" cy="738" r="1.1" fill="#2a4252"/><path d="M889 740.5 V746 M886.5 746.5 H891.5" stroke="#2a4252" stroke-width="1.6"/>
</svg></body></html>
